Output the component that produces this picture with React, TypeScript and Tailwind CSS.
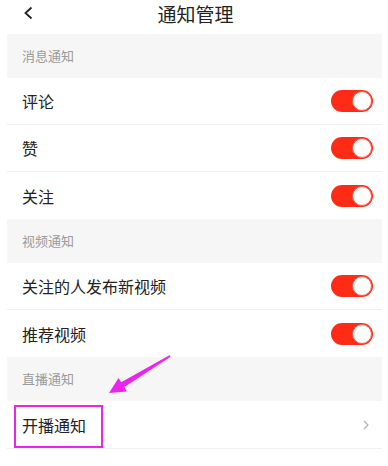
import React from 'react';

type Item = { label: string; on?: boolean; link?: boolean };

const sections: { title: string; items: Item[] }[] = [
  { title: '消息通知', items: [{ label: '评论', on: true }, { label: '赞', on: true }, { label: '关注', on: true }] },
  { title: '视频通知', items: [{ label: '关注的人发布新视频', on: true }, { label: '推荐视频', on: true }] },
  { title: '直播通知', items: [{ label: '开播通知', link: true }] },
];

function Toggle() {
  return (
    <div className="w-[42px] h-[22px] rounded-full bg-[#fe2c17] flex items-center justify-end p-[1px]">
      <div className="w-[20px] h-[20px] rounded-full bg-white border border-[#fe5a48]" />
    </div>
  );
}

function Row({ item, last }: { item: Item; last: boolean }) {
  return (
    <div className={`h-[47px] flex items-center justify-between pl-[15px] pr-[9px] bg-white ${last ? '' : 'border-b border-[#efefef]'}`}>
      <span className="text-[16px] text-[#222]">{item.label}</span>
      {item.link ? (
        <svg width="6" height="10" viewBox="0 0 6 10" className="mr-[4px]">
          <path d="M1 1l4 4-4 4" fill="none" stroke="#b0b0b0" strokeWidth="1.2" />
        </svg>
      ) : (
        <Toggle />
      )}
    </div>
  );
}

export default function App() {
  return (
    <div
      className="relative w-[388px] h-[466px] bg-white overflow-hidden"
      style={{ fontFamily: '"Noto Sans CJK SC", "Noto Sans", sans-serif' }}
    >
      <div className="relative h-[34px] flex items-center justify-center pb-[7px]">
        <svg width="11" height="14" viewBox="0 0 11 14" className="absolute left-[23px] top-[6px]">
          <path d="M8.5 1.5L2.5 7l6 5.5" fill="none" stroke="#222" strokeWidth="1.8" />
        </svg>
        <span className="text-[19px] text-[#222] leading-none pl-[3px]">通知管理</span>
      </div>

      <div className="mx-[7px] w-[375px]">
        {sections.map((s) => (
          <div key={s.title}>
            <div className="h-[44px] bg-[#f6f6f6] flex items-center pl-[15px] text-[13px] text-[#9a9a9a]">{s.title}</div>
            {s.items.map((it, i) => (
              <Row key={it.label} item={it} last={i === s.items.length - 1} />
            ))}
          </div>
        ))}
        <div className="border-t border-[#efefef]" />
      </div>

      <div className="absolute left-[14px] top-[405px] w-[89px] h-[43px] border-2 border-[#ee22ee]" />
      <svg width="388" height="466" className="absolute left-0 top-0 pointer-events-none">
        <polygon
          points="170.6,356.8 124.4,387.1 126.8,391.5 109,393 118.5,378 121.2,382.3 169.4,355.2"
          fill="#ee22ee"
        />
      </svg>
    </div>
  );
}
